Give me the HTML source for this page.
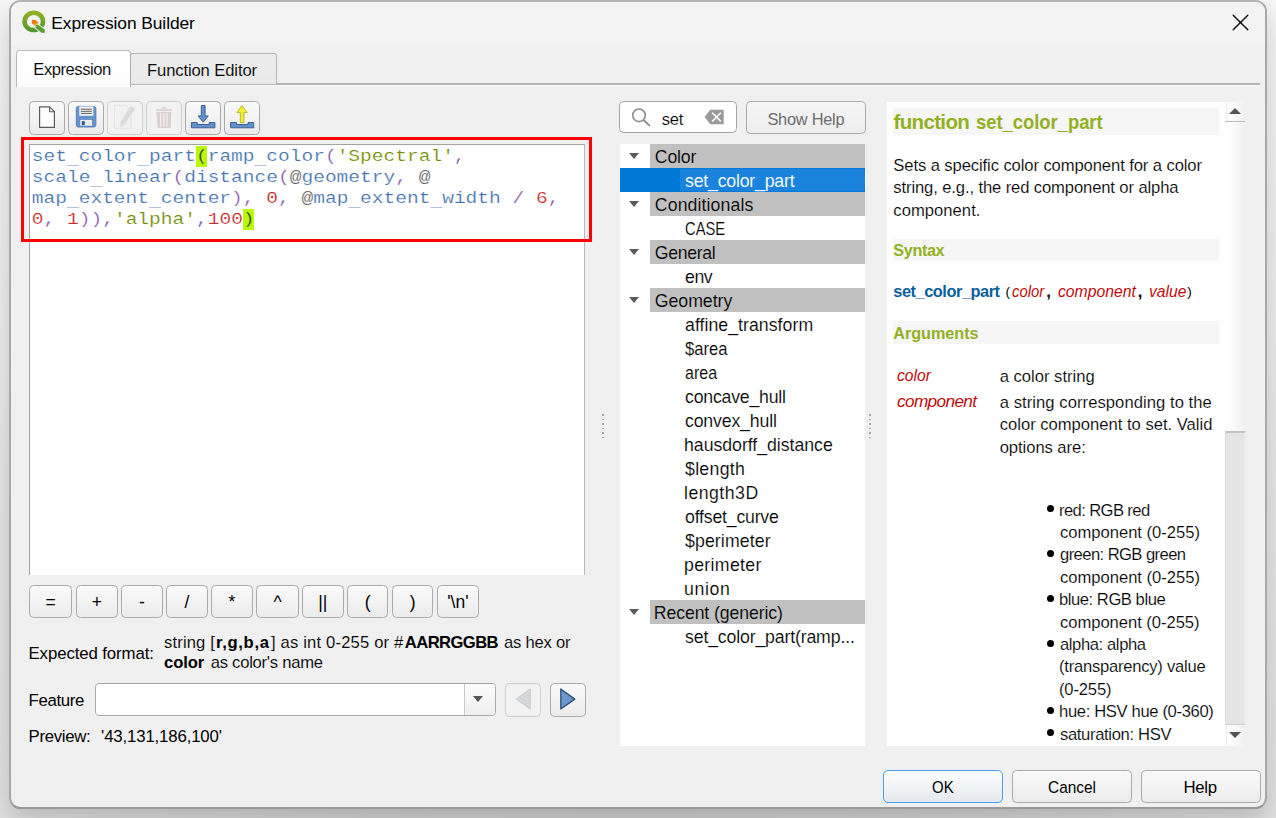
<!DOCTYPE html>
<html lang="en"><head><meta charset="utf-8"><title>Expression Builder</title>
<style>
html,body{margin:0;padding:0;}
body{width:1276px;height:818px;overflow:hidden;background:#fff;position:relative;font-family:"Liberation Sans",sans-serif;color:#000;}
#bg{position:absolute;left:0;top:0;width:1276px;height:818px;background:linear-gradient(90deg,#e2e2e2 0px,#dddddd 100px,#d9d9d9 200px,#d5d5d5 300px,#d1d1d1 450px,#cfcfcf 638px,#d1d1d1 826px,#d5d5d5 976px,#d9d9d9 1076px,#dddddd 1176px,#e2e2e2 1276px) 0 790px/1276px 28px no-repeat, linear-gradient(180deg,#f7f7f7 0px,#f4f4f4 100px,#f1f1f1 200px,#eeeeee 300px,#ebebeb 400px,#e7e7e7 500px,#e5e5e5 600px,#e3e3e3 700px,#e2e2e2 818px);}
#win{position:absolute;left:9px;top:0;width:1258px;height:809px;box-sizing:border-box;border:2px solid #a9a9a9;border-top-color:#b5b5b5;border-bottom-color:#999;border-radius:11.5px;background:#f0f0f0;overflow:hidden;box-shadow:0 12px 26px rgba(0,0,0,0.18);}
#titlebar{position:absolute;left:0;top:0;width:100%;height:42.5px;background:#f3f3f3;}
.abs,.t,div.b{position:absolute;}
.t{white-space:pre;display:block;}
.btn{position:absolute;box-sizing:border-box;border:1px solid #ababab;border-radius:4.5px;background:linear-gradient(180deg,#f9f9f9 0,#f4f4f4 45%,#ebebeb 100%);}
.btn.dis{border-color:#cdcdcd;background:#f2f2f2;}
.op{position:absolute;top:585px;width:42.5px;height:33px;box-sizing:border-box;border:1px solid #ababab;border-radius:4.5px;background:linear-gradient(180deg,#f9f9f9 0,#f4f4f4 45%,#ebebeb 100%);text-align:center;font-size:17.5px;line-height:33px;}
.cat{position:absolute;left:650px;width:215px;height:24px;background:#c0c0c0;}
.arr{position:absolute;left:629px;width:0;height:0;border-left:5.9px solid transparent;border-right:5.9px solid transparent;border-top:6.2px solid #5a5a5a;}
.hbg{position:absolute;left:893px;width:326px;background:#f6f6f6;}
.dot{position:absolute;left:1047.2px;width:7.2px;height:7.2px;border-radius:50%;background:#000;}
#code{position:absolute;left:31.8px;top:145.8px;font-family:"Liberation Mono",monospace;font-size:19.54px;line-height:21.03px;white-space:pre;color:#4d4d4c;margin:0;-webkit-text-stroke:0.22px #fff;}
#code .ln{height:21.03px;transform:scaleY(0.885);transform-origin:0 15.2px}#code .u{position:relative;top:3.2px}#code .f{color:#4271ae}#code .o{color:#8959a8}#code .s{color:#718c00}#code .n{color:#c82829}#code .h{color:#303030;-webkit-text-stroke:0.3px #b7f907}
</style></head><body>
<div id="bg"></div>
<div id="win"><div id="titlebar"></div></div>

<!-- title icon + close -->
<svg class="abs" style="left:18px;top:6px" width="32" height="32" viewBox="18 6 32 32">
 <defs><linearGradient id="qg" x1="0" y1="0" x2="0" y2="1"><stop offset="0" stop-color="#93b023"/><stop offset="1" stop-color="#589632"/></linearGradient></defs>
 <ellipse cx="33.8" cy="21.4" rx="9.2" ry="8.7" fill="none" stroke="url(#qg)" stroke-width="4.5"/>
 <path d="M34.6 24.4 L37.2 23.3 L45.6 29 L45.6 33.4 L41 33.4 L34.6 28.2 Z" fill="#f3f3f3"/>
 <path d="M35.7 24.9 L37.2 24.2 L44.8 29.4 L44.8 32.7 L41.4 32.7 L35.7 27.9 Z" fill="#5c9e37"/>
 <path d="M31.8 19.8 L35.6 19.9 L38.6 23.3 L35.2 26 L31.9 23.3 Z" fill="#ee7913"/>
 <path d="M35.2 26 L35.2 23.6 L38.3 23.6 L38.8 24.3 L36 24.6 L36 26.6 Z" fill="#f2e84a"/>
</svg>
<svg class="abs" style="left:1232px;top:14px" width="17" height="17" viewBox="0 0 17 17"><path d="M1.2 1.2 L15.8 15.8 M15.8 1.2 L1.2 15.8" stroke="#000" stroke-width="1.35" stroke-linecap="round" fill="none"/></svg>

<!-- tabs -->
<div class="abs" style="left:16px;top:83px;width:1244px;height:1.9px;background:#b4b4b4"></div>
<div class="abs" style="left:16px;top:84.9px;width:1244px;height:1.4px;background:#fafafa"></div>
<div class="abs" style="left:130px;top:53px;width:146.5px;height:30.5px;box-sizing:border-box;border:1.2px solid #b6b6b6;border-bottom:none;border-radius:3px 3px 0 0;background:linear-gradient(180deg,#ededed,#e9e9e9)"></div>
<div class="abs" style="left:16px;top:50px;width:115px;height:36.6px;box-sizing:border-box;border:1.2px solid #b9b9b9;border-right-color:#b0b0b0;border-bottom:none;border-radius:4px 4px 0 0;background:linear-gradient(180deg,#fff 0,#fdfdfd 80%,#fbfbfb 100%)"></div>
<!-- toolbar buttons -->
<div class="btn" style="left:29px;top:101px;width:36px;height:34px"></div>
<div class="btn" style="left:68px;top:101px;width:36px;height:34px"></div>
<div class="btn dis" style="left:107px;top:101px;width:36px;height:34px"></div>
<div class="btn dis" style="left:146px;top:101px;width:36px;height:34px"></div>
<div class="btn" style="left:185px;top:101px;width:36px;height:34px"></div>
<div class="btn" style="left:224px;top:101px;width:36px;height:34px"></div>
<svg class="abs" style="left:26px;top:98px" width="240" height="40" viewBox="26 98 240 40">
 <!-- new -->
 <path d="M39.6 106.9 H49.6 L54.4 111.7 V127.4 H39.6 Z" fill="#fff" stroke="#5a5a5a" stroke-width="1.2" stroke-linejoin="round"/>
 <path d="M49.6 106.9 V111.7 H54.4" fill="none" stroke="#5a5a5a" stroke-width="1.1" stroke-linejoin="round"/>
 <!-- save -->
 <rect x="76.3" y="106.4" width="19.6" height="20.6" rx="2.2" fill="#6593cb" stroke="#4e7db8" stroke-width="0.9"/>
 <rect x="79.3" y="106.4" width="14" height="9.4" fill="#f1f1f1"/>
 <path d="M80.8 109.2 H91.8 M80.8 111.3 H91.8 M80.8 113.4 H91.8" stroke="#4f4f4f" stroke-width="0.9"/>
 <rect x="79.9" y="119.6" width="12.4" height="6.4" fill="#ebebeb" stroke="#4e7db8" stroke-width="0.5"/>
 <rect x="81.8" y="121.1" width="3" height="4" fill="#2f5c97"/>
 <!-- edit (disabled) -->
 <path d="M114.4 105.3 H126 L131 110.3 V128.4 H114.4 Z" fill="#f1f1f1" stroke="#e2e2e2" stroke-width="0.9"/>
 <path d="M130.6 106 L135.2 108.8 L124.2 124.8 L120.2 127.2 L120.2 122.4 Z" fill="#dadad6" stroke="#e9e9e7" stroke-width="0.8"/>
 <!-- trash (disabled) -->
 <path d="M161.5 109.4 Q164 105.6 166.4 109.4" fill="none" stroke="#dbd1d1" stroke-width="1.3"/>
 <rect x="156" y="109.2" width="15.9" height="1.8" fill="#dbd1d1"/>
 <path d="M156.5 112.1 H171.3 L170.6 127.9 H157.6 Z" fill="#dbd1d1"/>
 <path d="M160.7 113.3 V126.6 M163.9 113.3 V126.6 M167.1 113.3 V126.6" stroke="#f6f3f3" stroke-width="1.2"/>
 <!-- download -->
 <path d="M201.3 105.5 H205.1 V115.9 H208.3 L203.2 122.2 L198 115.9 H201.3 Z" fill="#5f92cc" stroke="#35578a" stroke-width="0.9" stroke-linejoin="round"/>
 <path d="M191.4 122.5 H197.2 V124.5 H209.2 V122.5 H214.9 V127.8 H191.4 Z" fill="#5f92cc" stroke="#35578a" stroke-width="0.9" stroke-linejoin="round"/>
 <!-- upload -->
 <path d="M230.7 122.5 H236.5 V124.5 H248 V122.5 H253.7 V127.8 H230.7 Z" fill="#5f92cc" stroke="#35578a" stroke-width="0.9" stroke-linejoin="round"/>
 <path d="M242 105.6 L247.3 112.6 H243.9 V122.6 H240.3 V112.6 H236.9 Z" fill="#f3f02e" stroke="#b9b21c" stroke-width="0.9" stroke-linejoin="round"/>
</svg>

<!-- editor -->
<div class="abs" style="left:29px;top:144px;width:556px;height:431px;box-sizing:border-box;background:#fff;border-left:1px solid #a3a3a3;border-top:1px solid #a3a3a3;border-right:1px solid #b8b8b8"></div>
<div class="abs" style="left:195.9px;top:145.8px;width:11.2px;height:21.1px;background:#b7f907"></div><div class="abs" style="left:242.8px;top:208.9px;width:11.3px;height:21.2px;background:#b7f907"></div>
<div id="code"><div class="ln"><span class="f">set<span class=u>_</span>color<span class=u>_</span>part</span><span class="h">(</span><span class="f">ramp<span class=u>_</span>color</span><span class="o">(</span><span class="s">'Spectral'</span><span class="o">,</span></div><div class="ln"><span class="f">scale<span class=u>_</span>linear</span><span class="o">(</span><span class="f">distance</span><span class="o">(</span>@<span class="f">geometry</span><span class="o">,</span> @</div><div class="ln"><span class="f">map<span class=u>_</span>extent<span class=u>_</span>center</span><span class="o">),</span> <span class="n">0</span><span class="o">,</span> @<span class="f">map<span class=u>_</span>extent<span class=u>_</span>width</span> <span class="o">/</span> <span class="n">6</span><span class="o">,</span></div><div class="ln"><span class="n">0</span><span class="o">,</span> <span class="n">1</span><span class="o">)),</span><span class="s">'alpha'</span><span class="o">,</span><span class="n">100</span><span class="h">)</span></div></div>
<div class="abs" style="left:21px;top:137px;width:571px;height:105px;box-sizing:border-box;border:3px solid #ff0000"></div>

<!-- operator buttons -->
<div class="op" style="left:29px;width:43.2px">=</div><div class="op" style="left:76px;width:41.8px">+</div><div class="op" style="left:121.1px;width:41.6px">-</div><div class="op" style="left:166.2px;width:41.4px">/</div><div class="op" style="left:211.2px;width:41.6px">*</div><div class="op" style="left:256px;width:43px">^</div><div class="op" style="left:302.2px;width:41.4px">||</div><div class="op" style="left:347.1px;width:41.2px">(</div><div class="op" style="left:392px;width:41.4px">)</div><div class="op" style="left:437.2px;width:41.4px">'\n'</div>

<!-- feature combo -->
<div class="abs" style="left:94.5px;top:683px;width:401px;height:33px;box-sizing:border-box;border:1px solid #ababab;border-top-color:#a2a2a2;border-radius:4.5px;background:#fff"></div>
<div class="abs" style="left:464px;top:684px;width:29.5px;height:31px;border-left:1px solid #c9c9c9;border-radius:0 3.5px 3.5px 0;background:linear-gradient(180deg,#fcfcfc,#f6f6f6 50%,#eeeeee)"></div>
<div class="abs" style="left:472.5px;top:696px;width:0;height:0;border-left:5.8px solid transparent;border-right:5.8px solid transparent;border-top:6.3px solid #555"></div>
<div class="btn dis" style="left:505.2px;top:683px;width:35.5px;height:33.6px"></div>
<div class="btn" style="left:550.1px;top:683px;width:35.6px;height:33.6px"></div>
<svg class="abs" style="left:505px;top:683px" width="82" height="34" viewBox="505 683 82 34">
 <path d="M530.3 689 L530.3 709 L516.2 699.1 Z" fill="#d6d9dc" stroke="#c6c9cc" stroke-width="1" stroke-linejoin="round"/>
 <path d="M560.8 689 L560.8 709 L574.8 699.1 Z" fill="#6b97ca" stroke="#2e4f80" stroke-width="1.3" stroke-linejoin="round"/>
</svg>

<!-- search + show help -->
<div class="abs" style="left:619px;top:101px;width:118px;height:32px;box-sizing:border-box;border:1.3px solid #a6a6a6;border-radius:4.5px;background:#fff"></div>
<svg class="abs" style="left:628px;top:104px" width="28" height="28" viewBox="628 104 28 28"><circle cx="639" cy="115.3" r="6.3" fill="none" stroke="#8d8d8d" stroke-width="1.6"/><path d="M643.8 120.3 L649.3 125.4" stroke="#8d8d8d" stroke-width="1.9" stroke-linecap="round"/></svg>
<svg class="abs" style="left:702px;top:106px" width="26" height="22" viewBox="702 106 26 22"><path d="M710.3 109.8 H723.7 V124.3 H710.3 L704.6 117.05 Z" fill="#9a9a9a"/><path d="M712.7 113.2 L720.4 120.9 M720.4 113.2 L712.7 120.9" stroke="#fff" stroke-width="1.6" stroke-linecap="round"/></svg>
<div class="btn" style="left:746px;top:101px;width:120px;height:32.5px;background:linear-gradient(180deg,#f6f6f6,#ededed)"></div>

<!-- tree -->
<div class="abs" style="left:620px;top:144px;width:245px;height:601.5px;background:#fff"></div>
<div class="cat" style="top:144px"></div><div class="arr" style="top:152.8px"></div>
<div class="cat" style="top:192px"></div><div class="arr" style="top:200.8px"></div>
<div class="cat" style="top:240px"></div><div class="arr" style="top:248.8px"></div>
<div class="cat" style="top:288px"></div><div class="arr" style="top:296.8px"></div>
<div class="cat" style="top:600px"></div><div class="arr" style="top:608.8px"></div>
<div class="abs" style="left:620px;top:168px;width:245px;height:24px;background:#0078d7"></div><div class="abs" style="left:680.3px;top:169px;width:184.7px;height:22px;background:#1a84dc"></div>

<!-- help panel -->
<div class="abs" style="left:887px;top:102px;width:359px;height:643.5px;background:linear-gradient(90deg,#fff 0,#fff 341px,#f0f0f0 358px)"></div>
<div class="hbg" style="top:108px;height:27px"></div>
<div class="hbg" style="top:239px;height:22px"></div>
<div class="hbg" style="top:321.3px;height:22.5px"></div>
<div class="dot" style="top:505.3px"></div>
<div class="dot" style="top:550.1px"></div>
<div class="dot" style="top:594.9px"></div>
<div class="dot" style="top:639.7px"></div>
<div class="dot" style="top:706.9px"></div>
<div class="dot" style="top:729.3px"></div>
<!-- scrollbar -->
<div class="abs" style="left:1225px;top:431px;width:21px;height:294px;box-sizing:border-box;background:#e5e5e5;border-top:2px solid #c2c2c2;border-left:1.5px solid #ddd;border-right:2px solid #ececec;border-bottom:1px solid #d0d0d0"></div>
<div class="abs" style="left:1225px;top:121px;width:20px;height:1px;background:#bdbdbd"></div>
<div class="abs" style="left:1225.5px;top:102px;width:1px;height:19px;background:#ececec"></div>
<div class="abs" style="left:1229.3px;top:108.3px;width:0;height:0;border-left:6.2px solid transparent;border-right:6.2px solid transparent;border-bottom:6px solid #555"></div>
<div class="abs" style="left:1229.4px;top:731.5px;width:0;height:0;border-left:6.2px solid transparent;border-right:6.2px solid transparent;border-top:6px solid #555"></div>

<div class="abs" style="left:1225.5px;top:725px;width:1px;height:20.5px;background:#ececec"></div>
<!-- splitter dots -->
<div class="abs" style="left:602px;top:414px;width:2px;height:2px;background:#a6a6a6"></div><div class="abs" style="left:602px;top:419.2px;width:2px;height:1px;background:#a6a6a6"></div><div class="abs" style="left:602px;top:423px;width:2px;height:2px;background:#a6a6a6"></div><div class="abs" style="left:602px;top:428.2px;width:2px;height:1px;background:#a6a6a6"></div><div class="abs" style="left:602px;top:432px;width:2px;height:2px;background:#a6a6a6"></div><div class="abs" style="left:602px;top:437.2px;width:2px;height:1px;background:#a6a6a6"></div><div class="abs" style="left:869px;top:414px;width:2px;height:2px;background:#a6a6a6"></div><div class="abs" style="left:869px;top:419.2px;width:2px;height:1px;background:#a6a6a6"></div><div class="abs" style="left:869px;top:423px;width:2px;height:2px;background:#a6a6a6"></div><div class="abs" style="left:869px;top:428.2px;width:2px;height:1px;background:#a6a6a6"></div><div class="abs" style="left:869px;top:432px;width:2px;height:2px;background:#a6a6a6"></div><div class="abs" style="left:869px;top:437.2px;width:2px;height:1px;background:#a6a6a6"></div>

<!-- dialog buttons -->
<div class="btn" style="left:883px;top:770px;width:119.8px;height:33px;border:1.5px solid #48a1f1;border-radius:5px;background:linear-gradient(180deg,#fdfeff 0,#f1f4f7 50%,#e4e9ee 100%)"></div>
<div class="btn" style="left:1012.1px;top:770px;width:119.5px;height:33px"></div>
<div class="btn" style="left:1141px;top:770px;width:119.7px;height:33px"></div>

<span class="t" style="left:51.30px;top:11.57px;font-size:17.4px;line-height:22px;letter-spacing:-0.082px;">Expression Builder</span>
<span class="t" style="left:33.30px;top:58.75px;font-size:16.6px;line-height:21px;letter-spacing:-0.462px;-webkit-text-stroke:0.1px #fff;">Expression</span>
<span class="t" style="left:147.00px;top:59.75px;font-size:16.6px;line-height:21px;letter-spacing:-0.113px;-webkit-text-stroke:0.1px #ebebeb;">Function Editor</span>
<span class="t" style="left:661.80px;top:108.55px;font-size:16.6px;line-height:21px;letter-spacing:-0.313px;-webkit-text-stroke:0.15px #fff;">set</span>
<span class="t" style="left:767.40px;top:108.72px;font-size:16.4px;line-height:20px;letter-spacing:-0.256px;color:#6d6d6d;">Show Help</span>
<span class="t" style="left:654.80px;top:145.67px;font-size:17.7px;line-height:22px;letter-spacing:-0.194px;-webkit-text-stroke:0.15px #c0c0c0;">Color</span>
<span class="t" style="left:685.00px;top:169.67px;font-size:17.7px;line-height:22px;letter-spacing:-0.190px;color:#fff;-webkit-text-stroke:0.1px #1a84dc;">set_color_part</span>
<span class="t" style="left:654.80px;top:193.67px;font-size:17.7px;line-height:22px;letter-spacing:0.109px;-webkit-text-stroke:0.15px #c0c0c0;">Conditionals</span>
<span class="t" style="left:685.00px;top:217.67px;font-size:17.7px;line-height:22px;transform:scaleX(0.8332);transform-origin:0 0;-webkit-text-stroke:0.15px #fff;">CASE</span>
<span class="t" style="left:654.80px;top:241.67px;font-size:17.7px;line-height:22px;letter-spacing:-0.349px;-webkit-text-stroke:0.15px #c0c0c0;">General</span>
<span class="t" style="left:685.00px;top:265.67px;font-size:17.7px;line-height:22px;letter-spacing:-0.437px;-webkit-text-stroke:0.15px #fff;">env</span>
<span class="t" style="left:654.80px;top:289.67px;font-size:17.7px;line-height:22px;letter-spacing:-0.030px;-webkit-text-stroke:0.15px #c0c0c0;">Geometry</span>
<span class="t" style="left:685.00px;top:313.67px;font-size:17.7px;line-height:22px;letter-spacing:0.043px;-webkit-text-stroke:0.15px #fff;">affine_transform</span>
<span class="t" style="left:685.00px;top:337.67px;font-size:17.7px;line-height:22px;transform:scaleX(0.9383);transform-origin:0 0;-webkit-text-stroke:0.15px #fff;">$area</span>
<span class="t" style="left:685.00px;top:361.67px;font-size:17.7px;line-height:22px;transform:scaleX(0.9082);transform-origin:0 0;-webkit-text-stroke:0.15px #fff;">area</span>
<span class="t" style="left:685.00px;top:385.67px;font-size:17.7px;line-height:22px;letter-spacing:-0.202px;-webkit-text-stroke:0.15px #fff;">concave_hull</span>
<span class="t" style="left:685.00px;top:409.67px;font-size:17.7px;line-height:22px;letter-spacing:-0.158px;-webkit-text-stroke:0.15px #fff;">convex_hull</span>
<span class="t" style="left:684.00px;top:433.67px;font-size:17.7px;line-height:22px;letter-spacing:-0.024px;-webkit-text-stroke:0.15px #fff;">hausdorff_distance</span>
<span class="t" style="left:685.00px;top:457.67px;font-size:17.7px;line-height:22px;letter-spacing:0.301px;-webkit-text-stroke:0.15px #fff;">$length</span>
<span class="t" style="left:684.00px;top:481.67px;font-size:17.7px;line-height:22px;letter-spacing:0.482px;-webkit-text-stroke:0.15px #fff;">length3D</span>
<span class="t" style="left:685.00px;top:505.67px;font-size:17.7px;line-height:22px;letter-spacing:-0.199px;-webkit-text-stroke:0.15px #fff;">offset_curve</span>
<span class="t" style="left:685.00px;top:529.67px;font-size:17.7px;line-height:22px;letter-spacing:0.116px;-webkit-text-stroke:0.15px #fff;">$perimeter</span>
<span class="t" style="left:684.00px;top:553.67px;font-size:17.7px;line-height:22px;letter-spacing:0.336px;-webkit-text-stroke:0.15px #fff;">perimeter</span>
<span class="t" style="left:684.00px;top:577.67px;font-size:17.7px;line-height:22px;letter-spacing:0.665px;-webkit-text-stroke:0.15px #fff;">union</span>
<span class="t" style="left:653.80px;top:601.67px;font-size:17.7px;line-height:22px;letter-spacing:-0.111px;-webkit-text-stroke:0.15px #c0c0c0;">Recent (generic)</span>
<span class="t" style="left:685.00px;top:625.67px;font-size:17.7px;line-height:22px;letter-spacing:-0.152px;-webkit-text-stroke:0.15px #fff;">set_color_part(ramp...</span>
<span class="t" style="left:893.50px;top:109.10px;font-size:20.5px;line-height:26px;letter-spacing:-0.645px;font-weight:bold;color:#93b023;">function</span>
<span class="t" style="left:975.90px;top:109.10px;font-size:20.5px;line-height:26px;transform:scaleX(0.8964);transform-origin:0 0;font-weight:bold;color:#93b023;">set_color_part</span>
<span class="t" style="left:893.30px;top:154.75px;font-size:16.6px;line-height:21px;letter-spacing:-0.094px;-webkit-text-stroke:0.15px #fff;">Sets a specific color component for a color</span>
<span class="t" style="left:893.30px;top:177.15px;font-size:16.6px;line-height:21px;letter-spacing:-0.113px;-webkit-text-stroke:0.15px #fff;">string, e.g., the red component or alpha</span>
<span class="t" style="left:893.30px;top:199.55px;font-size:16.6px;line-height:21px;letter-spacing:0.044px;-webkit-text-stroke:0.15px #fff;">component.</span>
<span class="t" style="left:893.30px;top:239.59px;font-size:16.2px;line-height:20px;letter-spacing:-0.356px;font-weight:bold;color:#93b023;">Syntax</span>
<span class="t" style="left:893.30px;top:281.12px;font-size:16.4px;line-height:20px;letter-spacing:-0.477px;font-weight:bold;color:#0a6099;">set_color_part</span>
<span class="t" style="left:1005.60px;top:283.22px;font-size:13.5px;line-height:17px;">(</span>
<span class="t" style="left:1012.00px;top:279.84px;font-size:17.2px;line-height:22px;transform:scaleX(0.8643);transform-origin:0 0;font-style:italic;color:#bf0c0c;">color</span>
<span class="t" style="left:1046.20px;top:280.55px;font-size:16.6px;line-height:21px;font-weight:bold;">,</span>
<span class="t" style="left:1057.80px;top:279.84px;font-size:17.2px;line-height:22px;transform:scaleX(0.9146);transform-origin:0 0;font-style:italic;color:#bf0c0c;">component</span>
<span class="t" style="left:1137.80px;top:280.55px;font-size:16.6px;line-height:21px;font-weight:bold;">,</span>
<span class="t" style="left:1148.90px;top:279.84px;font-size:17.2px;line-height:22px;transform:scaleX(0.9104);transform-origin:0 0;font-style:italic;color:#bf0c0c;">value</span>
<span class="t" style="left:1187.20px;top:283.22px;font-size:13.5px;line-height:17px;">)</span>
<span class="t" style="left:893.30px;top:322.99px;font-size:16.2px;line-height:20px;letter-spacing:-0.018px;font-weight:bold;color:#93b023;">Arguments</span>
<span class="t" style="left:897.00px;top:363.64px;font-size:17.2px;line-height:22px;transform:scaleX(0.9084);transform-origin:0 0;font-style:italic;color:#bf0c0c;">color</span>
<span class="t" style="left:999.70px;top:365.95px;font-size:16.6px;line-height:21px;-webkit-text-stroke:0.15px #fff;">a color string</span>
<span class="t" style="left:897.00px;top:390.04px;font-size:17.2px;line-height:22px;letter-spacing:-0.621px;font-style:italic;color:#bf0c0c;">component</span>
<span class="t" style="left:999.70px;top:392.05px;font-size:16.6px;line-height:21px;letter-spacing:0.065px;-webkit-text-stroke:0.15px #fff;">a string corresponding to the</span>
<span class="t" style="left:999.70px;top:414.35px;font-size:16.6px;line-height:21px;-webkit-text-stroke:0.15px #fff;">color component to set. Valid</span>
<span class="t" style="left:999.70px;top:436.75px;font-size:16.6px;line-height:21px;letter-spacing:-0.055px;-webkit-text-stroke:0.15px #fff;">options are:</span>
<span class="t" style="left:1059.00px;top:499.65px;font-size:16.6px;line-height:21px;letter-spacing:-0.602px;-webkit-text-stroke:0.15px #fff;">red: RGB red</span>
<span class="t" style="left:1060.00px;top:522.05px;font-size:16.6px;line-height:21px;letter-spacing:-0.017px;-webkit-text-stroke:0.15px #fff;">component (0-255)</span>
<span class="t" style="left:1060.00px;top:544.45px;font-size:16.6px;line-height:21px;letter-spacing:-0.576px;-webkit-text-stroke:0.15px #fff;">green: RGB green</span>
<span class="t" style="left:1060.00px;top:566.85px;font-size:16.6px;line-height:21px;letter-spacing:-0.017px;-webkit-text-stroke:0.15px #fff;">component (0-255)</span>
<span class="t" style="left:1059.00px;top:589.25px;font-size:16.6px;line-height:21px;letter-spacing:-0.454px;-webkit-text-stroke:0.15px #fff;">blue: RGB blue</span>
<span class="t" style="left:1060.00px;top:611.65px;font-size:16.6px;line-height:21px;letter-spacing:-0.042px;-webkit-text-stroke:0.15px #fff;">component (0-255)</span>
<span class="t" style="left:1060.00px;top:634.05px;font-size:16.6px;line-height:21px;letter-spacing:-0.399px;-webkit-text-stroke:0.15px #fff;">alpha: alpha</span>
<span class="t" style="left:1059.00px;top:656.45px;font-size:16.6px;line-height:21px;letter-spacing:-0.244px;-webkit-text-stroke:0.15px #fff;">(transparency) value</span>
<span class="t" style="left:1059.00px;top:678.85px;font-size:16.6px;line-height:21px;letter-spacing:-0.161px;-webkit-text-stroke:0.15px #fff;">(0-255)</span>
<span class="t" style="left:1059.00px;top:701.25px;font-size:16.6px;line-height:21px;letter-spacing:-0.347px;-webkit-text-stroke:0.15px #fff;">hue: HSV hue (0-360)</span>
<span class="t" style="left:1060.00px;top:723.65px;font-size:16.6px;line-height:21px;letter-spacing:-0.339px;-webkit-text-stroke:0.15px #fff;">saturation: HSV</span>
<span class="t" style="left:28.50px;top:642.68px;font-size:16.8px;line-height:21px;letter-spacing:-0.093px;">Expected format:</span>
<span class="t" style="left:164.10px;top:632.05px;font-size:16.6px;line-height:21px;letter-spacing:0.130px;-webkit-text-stroke:0.1px #f0f0f0;">string [</span>
<span class="t" style="left:215.90px;top:632.05px;font-size:16.6px;line-height:21px;letter-spacing:0.693px;font-weight:bold;">r,g,b,a</span>
<span class="t" style="left:271.00px;top:632.05px;font-size:16.6px;line-height:21px;letter-spacing:0.177px;-webkit-text-stroke:0.1px #f0f0f0;">] as int 0-255 or #</span>
<span class="t" style="left:404.80px;top:632.05px;font-size:16.6px;line-height:21px;letter-spacing:-0.562px;font-weight:bold;">AARRGGBB</span>
<span class="t" style="left:504.10px;top:632.05px;font-size:16.6px;line-height:21px;letter-spacing:-0.229px;-webkit-text-stroke:0.1px #f0f0f0;">as hex or</span>
<span class="t" style="left:164.10px;top:652.15px;font-size:16.6px;line-height:21px;letter-spacing:-0.103px;font-weight:bold;">color</span>
<span class="t" style="left:210.70px;top:652.15px;font-size:16.6px;line-height:21px;letter-spacing:-0.240px;-webkit-text-stroke:0.1px #f0f0f0;">as color's name</span>
<span class="t" style="left:28.50px;top:689.88px;font-size:16.8px;line-height:21px;letter-spacing:-0.333px;">Feature</span>
<span class="t" style="left:28.50px;top:725.98px;font-size:16.8px;line-height:21px;letter-spacing:-0.312px;">Preview:</span>
<span class="t" style="left:101.10px;top:725.98px;font-size:16.8px;line-height:21px;letter-spacing:-0.150px;">'43,131,186,100'</span>
<span class="t" style="left:932.40px;top:777.18px;font-size:16.8px;line-height:21px;transform:scaleX(0.8939);transform-origin:0 0;">OK</span>
<span class="t" style="left:1047.50px;top:777.18px;font-size:16.8px;line-height:21px;transform:scaleX(0.9183);transform-origin:0 0;">Cancel</span>
<span class="t" style="left:1183.40px;top:777.18px;font-size:16.8px;line-height:21px;letter-spacing:-0.293px;">Help</span>
</body></html>
